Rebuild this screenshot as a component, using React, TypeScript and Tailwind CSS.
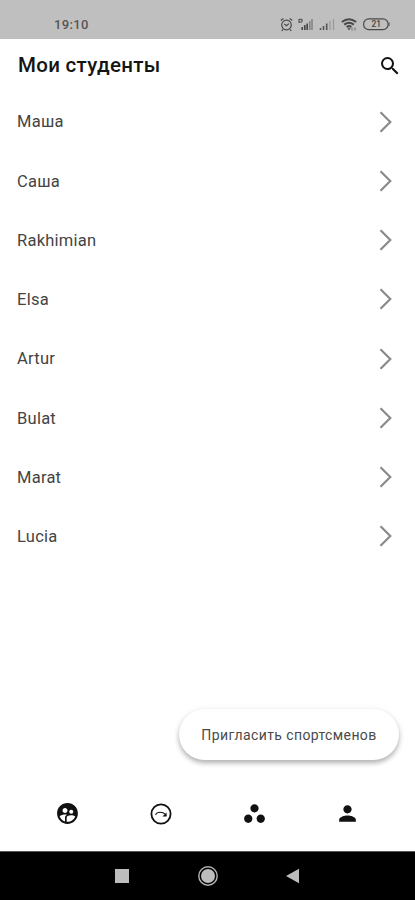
import React from "react";
import { MdPerson, MdSearch, MdSupervisedUserCircle, MdWorkspaces } from "react-icons/md";

const students = ["Маша", "Саша", "Rakhimian", "Elsa", "Artur", "Bulat", "Marat", "Lucia"];

function StatusIcons() {
  return (
    <svg width="112" height="18" viewBox="279 15 112 18" fill="none" stroke="#4a4a4a">
      <circle cx="286.5" cy="25" r="4.8" strokeWidth="1.2" />
      <path d="M280.8 20.6l2.6-2M292.2 20.6l-2.6-2M283 29.5l-1.3 1.4M290 29.5l1.3 1.4M284.3 24l2.2 1.8 2.4-2.2" strokeWidth="1.2" />
      <path d="M299 19v4M299 19.3h3M299 22h3M302 19v3" strokeWidth="1" />
      <path d="M302.2 30v-3M304.8 30v-5M307.2 30v-6.5" strokeWidth="1.7" />
      <path d="M309.8 30v-9M312 30v-11" stroke="#858585" strokeWidth="1.6" />
      <path d="M320.5 30v-2M323.5 30v-4M326.7 30v-6.5" stroke="#555" strokeWidth="1.6" />
      <path d="M330 30v-9M333.5 30v-11" stroke="#9b9b9b" strokeWidth="1.3" />
      <path d="M341.8 22q7.2-5.6 14.4 0M344.2 24.6q4.8-3.6 9.6 0M346.6 27q2.4-1.8 4.8 0" strokeWidth="2" />
      <path d="M347.3 28.3h3.4l-1.7 2z" fill="#444" stroke="none" />
      <path d="M352 30.5v-3M355 30.5v-3" stroke="#777" strokeWidth="1.1" />
      <rect x="363.6" y="18.8" width="24.5" height="10.8" rx="5.2" strokeWidth="1.2" />
      <path d="M389 22.5v3.5" strokeWidth="1" />
      <text x="376.3" y="27.3" textAnchor="middle" fontSize="8.5" fontWeight="500" fontFamily="Roboto, sans-serif" fill="#444" stroke="none">21</text>
    </svg>
  );
}

function Chevron() {
  return (
    <svg width="14" height="22" viewBox="0 0 14 22" fill="none" stroke="#8a8a8a" strokeWidth="2.2">
      <path d="M1.5 1.2L11.3 11L1.5 20.8" />
    </svg>
  );
}

function CircleArrow() {
  return (
    <svg width="24" height="24" viewBox="0 0 24 24" fill="none" stroke="#111">
      <circle cx="12" cy="12" r="9.6" strokeWidth="1.8" />
      <path d="M6.6 13q.8-2.8 4.8-2.8 3 0 4.6 2" strokeWidth="1.1" />
      <path d="M17.6 10.4v4h-4.2z" fill="#111" stroke="none" />
    </svg>
  );
}

export default function App() {
  return (
    <div className="relative flex h-[900px] w-[415px] flex-col overflow-hidden bg-white font-['Roboto','Noto_Sans',sans-serif]">
      <div className="flex h-[39px] shrink-0 items-start justify-between bg-[#bfbfbf] pr-6 pl-[54px]">
        <span className="mt-[15px] text-[13px] leading-5 font-medium tracking-[0.35px] text-[#555]">19:10</span>
        <div className="mt-[15px]"><StatusIcons /></div>
      </div>
      <header className="flex h-[53px] shrink-0 items-center justify-between pr-[13px] pl-[18px]">
        <h1 className="text-[20.5px] font-medium tracking-[0.3px] text-[#151515]">Мои студенты</h1>
        <MdSearch size={24} color="#111" />
      </header>
      <ul className="flex flex-col">
        {students.map((name) => (
          <li key={name} className="flex h-[59.25px] items-center justify-between pr-[22px] pl-[17px]">
            <span className="pt-[2px] text-[16.5px] tracking-[0.25px] text-[#444]">{name}</span>
            <Chevron />
          </li>
        ))}
      </ul>
      <div className="flex flex-1 items-end justify-end pr-4 pb-4">
        <button className="flex h-[51px] w-[220px] items-center justify-center rounded-full bg-white pt-px text-[14px] tracking-[0.4px] text-[#4a4a4a] shadow-[0_3px_5px_rgba(0,0,0,0.28),0_1px_8px_rgba(0,0,0,0.06)]">
          Пригласить спортсменов
        </button>
      </div>
      <nav className="grid h-[75px] shrink-0 grid-cols-4 place-items-center px-[21px]">
        <MdSupervisedUserCircle size={25} color="#111" />
        <CircleArrow />
        <MdWorkspaces size={25} color="#111" />
        <MdPerson size={25} color="#111" />
      </nav>
      <div className="flex h-[49px] shrink-0 items-center border-t border-[#555] bg-black pl-[115px]">
        <div className="h-[14px] w-[14px] bg-[#bdbdbd]" />
        <svg className="ml-[68px]" width="22" height="22" viewBox="0 0 22 22">
          <circle cx="11" cy="11" r="9.2" fill="none" stroke="#b5b5b5" strokeWidth="1.4" />
          <circle cx="11" cy="11" r="7" fill="#bdbdbd" />
        </svg>
        <svg className="ml-[67px]" width="14" height="16" viewBox="0 0 14 16">
          <path d="M0 8L13 .8v14.4z" fill="#bdbdbd" />
        </svg>
      </div>
    </div>
  );
}
